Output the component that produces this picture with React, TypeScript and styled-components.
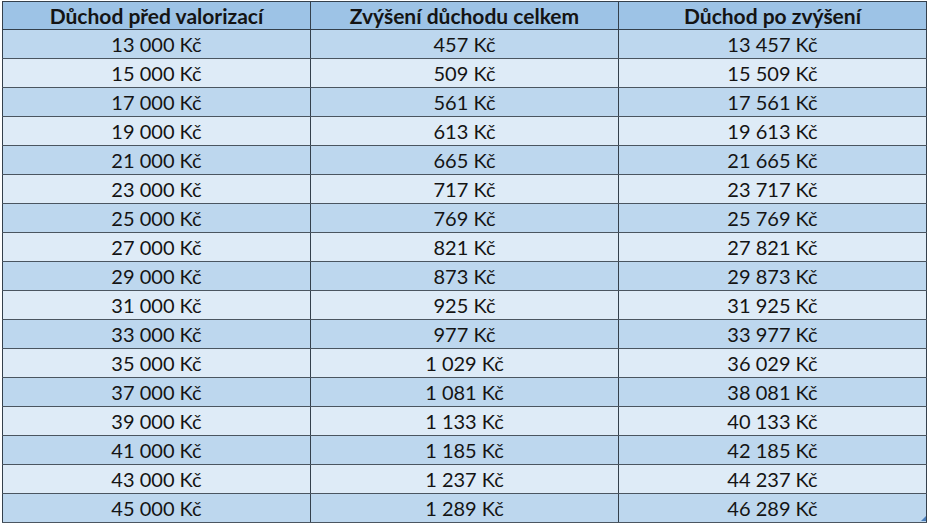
import React, { ReactElement } from 'react';
import styled, { createGlobalStyle } from 'styled-components';

const GlobalStyle = createGlobalStyle`
  html, body {
    background: #ffffff;
    margin: 0;
    padding: 0;
  }
`;

const Page = styled.div`
  box-sizing: border-box;
  padding: 1px 4px 0 2px;
  position: relative;
  width: 930px;
`;

const Table = styled.table`
  border-collapse: collapse;
  color: #141414;
  font-family: Lato, "Liberation Sans", sans-serif;
  table-layout: fixed;
  width: 925px;
`;

const HeadCell = styled.th`
  background: #9dc3e6;
  border: 1.5px solid #34404c;
  font-size: 21px;
  font-weight: 700;
  height: 27px;
  padding: 0;
  text-align: center;
`;

const Cell = styled.td<{ $light: boolean }>`
  background: ${({ $light }) => ($light ? '#deebf7' : '#bdd7ee')};
  border-bottom: 1.5px solid #4a5560;
  border-left: 1.5px solid #34404c;
  border-right: 1.5px solid #34404c;
  font-size: 20px;
  height: 28px;
  padding: 0;
  text-align: center;
`;

// small resize grip in the bottom-right corner of the table
const Grip = styled.svg`
  bottom: 2px;
  position: absolute;
  right: 4px;
`;

const fmt = (n: number): string => n.toString().replace(/\B(?=(\d{3})+(?!\d))/g, ' ') + ' Kč';

const rows = Array.from({ length: 17 }, (_, i) => {
  const before = 13000 + i * 2000;
  const raise = 457 + i * 52;
  return [before, raise, before + raise];
});

const App = (): ReactElement => (
  <Page>
    <GlobalStyle />
    <Table>
      <thead>
        <tr>
          <HeadCell>Důchod před valorizací</HeadCell>
          <HeadCell>Zvýšení důchodu celkem</HeadCell>
          <HeadCell>Důchod po zvýšení</HeadCell>
        </tr>
      </thead>
      <tbody>
        {rows.map((r, i) => (
          <tr key={r[0]}>
            {r.map((v, j) => (
              <Cell key={j} $light={i % 2 === 1}>{fmt(v)}</Cell>
            ))}
          </tr>
        ))}
      </tbody>
    </Table>
    <Grip width="5" height="5" viewBox="0 0 5 5">
      <path d="M5 0 L5 5 L0 5 Z" fill="#4a7ebb" />
    </Grip>
  </Page>
);

export default App;
